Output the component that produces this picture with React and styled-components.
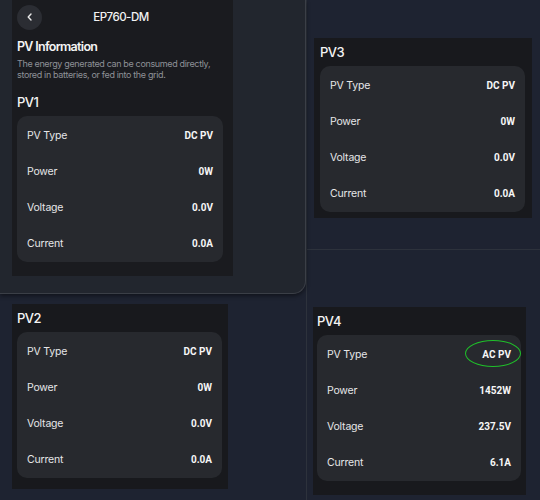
import React from "react";
import styled, { createGlobalStyle } from "styled-components";

const Global = createGlobalStyle`
  html, body { margin: 0; padding: 0; background: #1d2230; }
  body { font-family: Inter, "Noto Sans", sans-serif; -webkit-font-smoothing: antialiased; }
  * { box-sizing: border-box; }
`;

const Page = styled.div`
  width: 540px;
  height: 500px;
  display: grid;
  grid-template-columns: 306px 1fr;
  background: #1e2331;
  overflow: hidden;
`;

const LeftCol = styled.div`
  display: flex;
  flex-direction: column;
`;

const RightCol = styled.div`
  display: flex;
  flex-direction: column;
  border-left: 1px solid #2d323c;
`;

const Modal = styled.div`
  height: 294px;
  background: #22262e;
  border-right: 1px solid #3b3f47;
  border-bottom: 1px solid #3b3f47;
  border-bottom-right-radius: 13px;
  box-shadow: 0 2px 4px rgba(0, 0, 0, 0.45);
  padding-left: 12px;
  position: relative;
  z-index: 1;
`;

const Sheet = styled.div`
  width: 221px;
  height: 276px;
  background: #1a1b1f;
  padding: 4px 10px 0 5px;
  display: flex;
  flex-direction: column;
`;

const Header = styled.div`
  display: flex;
  align-items: center;
  height: 26px;
  position: relative;
`;

const BackButton = styled.div`
  width: 25px;
  height: 25px;
  border-radius: 50%;
  background: #2b2d33;
  display: flex;
  align-items: center;
  justify-content: center;
`;

const Title = styled.div`
  position: absolute;
  left: 0;
  right: 0;
  text-align: center;
  color: #f2f2f2;
  font-size: 11.5px;
  font-weight: 500;
  letter-spacing: -0.5px;
  pointer-events: none;
  padding-left: 2px;
`;

const SectionTitle = styled.div`
  margin-top: 9px;
  color: #f4f4f4;
  font-size: 12.5px;
  font-weight: 600;
  letter-spacing: -0.7px;
  line-height: 16px;
`;

const Desc = styled.div`
  margin-top: 3px;
  color: #8e9197;
  font-size: 9px;
  line-height: 11px;
  letter-spacing: -0.35px;
`;

const Panel = styled.div`
  background: #18191d;
  width: ${(p) => p.$w}px;
  margin-top: ${(p) => p.$top}px;
  margin-left: ${(p) => p.$left}px;
  padding: 0 ${(p) => p.$pr}px ${(p) => p.$pb}px ${(p) => p.$pl}px;
`;

const PanelTitle = styled.div`
  padding-top: ${(p) => p.$pt}px;
  margin-bottom: 5px;
  color: #f4f4f4;
  font-size: 13px;
  font-weight: 500;
  line-height: 18px;
  letter-spacing: -0.5px;
`;

const Card = styled.div`
  background: #27292e;
  border-radius: 10px;
  padding: 1px 10px 0;
`;

const Row = styled.div`
  height: 36.25px;
  display: flex;
  align-items: center;
  justify-content: space-between;
  position: relative;
`;

const Label = styled.span`
  color: #e6e6e8;
  font-size: 10.5px;
  letter-spacing: -0.2px;
`;

const Value = styled.span`
  color: #f6f6f6;
  font-size: 10px;
  font-weight: 700;
  font-family: Roboto, Inter, sans-serif;
`;

const Ring = styled.div`
  position: absolute;
  right: -10px;
  top: 50%;
  width: 56px;
  height: 27px;
  margin-top: -14px;
  border: 1.8px solid #1fbf2a;
  border-radius: 50%;
`;

const Cell = styled.div`
  height: ${(p) => (p.$h ? `${p.$h}px` : "auto")};
  flex: ${(p) => (p.$h ? "none" : 1)};
  border-bottom: ${(p) => (p.$line ? "1px solid #2d323c" : "none")};
  display: flex;
  flex-direction: column;
`;

function PVCard({ rows, ring }) {
  return (
    <Card>
      {rows.map(([k, v], i) => (
        <Row key={k}>
          <Label>{k}</Label>
          <Value>{v}</Value>
          {ring && i === 0 && <Ring />}
        </Row>
      ))}
    </Card>
  );
}

const zeroRows = [
  ["PV Type", "DC PV"],
  ["Power", "0W"],
  ["Voltage", "0.0V"],
  ["Current", "0.0A"],
];

const acRows = [
  ["PV Type", "AC PV"],
  ["Power", "1452W"],
  ["Voltage", "237.5V"],
  ["Current", "6.1A"],
];

export default function App() {
  return (
    <Page>
      <Global />
      <LeftCol>
        <Modal>
          <Sheet>
            <Header>
              <BackButton>
                <svg width="10" height="10" viewBox="0 0 10 10">
                  <path d="M6 2 L3.2 5 L6 8" fill="none" stroke="#e8e8e8" strokeWidth="1.4" strokeLinecap="round" strokeLinejoin="round" />
                </svg>
              </BackButton>
              <Title>EP760-DM</Title>
            </Header>
            <SectionTitle>PV Information</SectionTitle>
            <Desc>
              The energy generated can be consumed directly,
              <br />
              stored in batteries, or fed into the grid.
            </Desc>
            <PanelTitle $pt={13}>PV1</PanelTitle>
            <PVCard rows={zeroRows} />
          </Sheet>
        </Modal>
        <Cell>
          <Panel $w={216} $top={10} $left={12} $pl={5} $pr={6} $pb={11}>
            <PanelTitle $pt={5}>PV2</PanelTitle>
            <PVCard rows={zeroRows} />
          </Panel>
        </Cell>
      </LeftCol>
      <RightCol>
        <Cell $h={250} $line>
          <Panel $w={218} $top={38} $left={7} $pl={6} $pr={7} $pb={6}>
            <PanelTitle $pt={5}>PV3</PanelTitle>
            <PVCard rows={zeroRows} />
          </Panel>
        </Cell>
        <Cell>
          <Panel $w={213} $top={57} $left={6} $pl={4} $pr={5} $pb={14}>
            <PanelTitle $pt={5}>PV4</PanelTitle>
            <PVCard rows={acRows} ring />
          </Panel>
        </Cell>
      </RightCol>
    </Page>
  );
}
